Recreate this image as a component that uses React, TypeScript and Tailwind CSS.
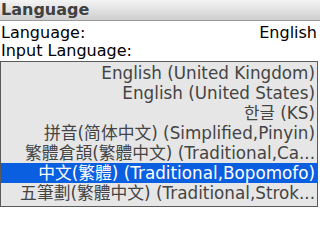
export default function App() {
  const font = { fontFamily: '"DejaVu Sans", "Noto Sans CJK TC", sans-serif' };
  const rows = [
    "English (United Kingdom)",
    "English (United States)",
    "한글 (KS)",
    "拼音(简体中文) (Simplified,Pinyin)",
    "繁體倉頡(繁體中文) (Traditional,Ca...",
    "中文(繁體) (Traditional,Bopomofo)",
    "五筆劃(繁體中文) (Traditional,Strok...",
  ];
  return (
    <div className="w-[320px] h-[240px] bg-white overflow-hidden" style={font}>
      <div className="h-[21px] bg-gradient-to-b from-[#f4f4f4] to-[#cfcfcf] border-b border-[#9a9a9a] flex items-center pl-[1px]">
        <span className="text-[16px] font-bold text-[#404040] leading-[20px]">Language</span>
      </div>
      <div className="mt-[3px] h-[18px] flex items-center justify-between pl-[1px] pr-[3px] text-[16px] leading-[18px] text-black">
        <span>Language:</span>
        <span>English</span>
      </div>
      <div className="h-[18px] flex items-center pl-[1px] text-[16px] leading-[18px] text-black">
        <span>Input Language:</span>
      </div>
      <div className="mt-[1px] w-[318px] h-[146px] border border-[#5a5a5a] bg-[#e6e6e6] pt-[1px] flex flex-col">
        {rows.map((r, i) => (
          <div
            key={i}
            className={
              i === 5
                ? "h-[20px] bg-[#0a5ee0] text-white text-right pr-[2px] text-[16.8px] leading-[20px] whitespace-nowrap overflow-hidden"
                : "h-[20px] text-[#444444] text-right pr-[2px] text-[16.8px] leading-[20px] whitespace-nowrap overflow-hidden"
            }
          >
            {r}
          </div>
        ))}
      </div>
    </div>
  );
}
